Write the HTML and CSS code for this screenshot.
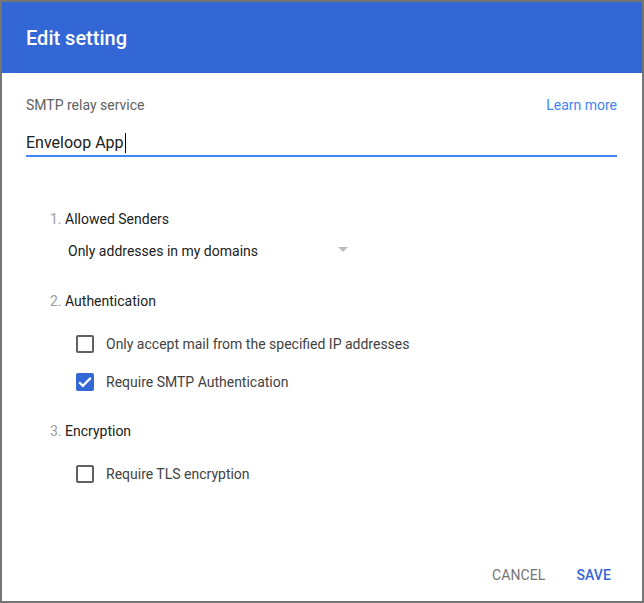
FILE: index.html
```html
<!DOCTYPE html>
<html>
<head>
<meta charset="utf-8">
<link rel="stylesheet" href="styles.css">
</head>
<body>
<div class="dialog">
  <div class="header"><h1 class="title">Edit setting</h1></div>
  <div class="content">
    <div class="label-row">
      <span class="field-label">SMTP relay service</span>
      <a class="learn">Learn more</a>
    </div>
    <div class="input-row">
      <span class="input-text">Enveloop App</span><span class="caret"></span>
    </div>

    <div class="section first">
      <div class="section-title"><span class="num">1.</span> Allowed Senders</div>
      <div class="dropdown">
        <span>Only addresses in my domains</span>
        <span class="arrow"></span>
      </div>
    </div>

    <div class="section">
      <div class="section-title"><span class="num">2.</span> Authentication</div>
      <div class="checks">
        <div class="check-row"><span class="box"></span><span class="check-label">Only accept mail from the specified IP addresses</span></div>
        <div class="check-row"><span class="box checked"><svg viewBox="0 0 18 18" width="18" height="18"><path d="M3.2 9.3l3.6 3.6L14.8 4.9" fill="none" stroke="#fff" stroke-width="2.2"/></svg></span><span class="check-label">Require SMTP Authentication</span></div>
      </div>
    </div>

    <div class="section">
      <div class="section-title"><span class="num">3.</span> Encryption</div>
      <div class="checks">
        <div class="check-row"><span class="box"></span><span class="check-label">Require TLS encryption</span></div>
      </div>
    </div>
  </div>
  <div class="actions">
    <button class="btn cancel">Cancel</button>
    <button class="btn save">Save</button>
  </div>
</div>
</body>
</html>
```

FILE: styles.css
```css
html, body {
  margin: 0;
  padding: 0;
}
body {
  background: #757575;
  font-family: Roboto, "Noto Sans", Arial, sans-serif;
  width: 644px;
  height: 603px;
  overflow: hidden;
  padding: 2px 2px 0 2px;
  box-sizing: border-box;
}
.dialog {
  background: #fff;
  width: 640px;
  height: 599px;
  display: flex;
  flex-direction: column;
}
.header {
  background: #3367d6;
  height: 71px;
  display: flex;
  align-items: center;
  padding: 0 24px;
  box-sizing: border-box;
}
.title {
  margin: 0;
  color: #fff;
  font-size: 20px;
  font-weight: 500;
  line-height: 24px;
  padding-top: 0;
}
.content {
  padding: 24px 25px 0 24px;
  flex: 1;
}
.label-row {
  display: flex;
  justify-content: space-between;
  align-items: center;
  height: 16px;
}
.field-label {
  font-size: 14px;
  color: #616161;
}
.learn {
  font-size: 14px;
  color: #4285f4;
}
.input-row {
  margin-top: 20px;
  height: 20px;
  padding-bottom: 2px;
  border-bottom: 2px solid #4285f4;
  display: flex;
  align-items: center;
}
.input-text {
  font-size: 16px;
  color: #212121;
  line-height: 20px;
}
.caret {
  width: 1px;
  height: 20px;
  background: #000;
  margin-left: 1px;
}
.section {
  padding-left: 24px;
  margin-top: 30px;
}
.section.first {
  margin-top: 52px;
}
.section-title {
  font-size: 14px;
  line-height: 20px;
  color: #212121;
}
.num {
  color: #9e9e9e;
}
.dropdown {
  margin-top: 12px;
  margin-left: 18px;
  width: 282px;
  display: flex;
  justify-content: space-between;
  align-items: center;
  font-size: 14px;
  line-height: 20px;
  color: #212121;
}
.arrow {
  width: 0;
  height: 0;
  border-left: 5.5px solid transparent;
  border-right: 5.5px solid transparent;
  border-top: 5px solid #bdbdbd;
  margin-right: 2px;
  margin-bottom: 3px;
}
.checks {
  margin-top: 23px;
  margin-left: 26px;
  display: flex;
  flex-direction: column;
  gap: 18px;
}
.section:last-child {
  margin-top: 29px;
}
.check-row {
  display: flex;
  align-items: center;
  height: 20px;
}
.box {
  width: 18px;
  height: 18px;
  box-sizing: border-box;
  border: 2px solid #616161;
  border-radius: 2px;
  margin-right: 12px;
  display: flex;
  align-items: center;
  justify-content: center;
}
.box.checked {
  background: #3367d6;
  border-color: #3367d6;
}
.box.checked svg {
  flex: none;
}
.check-label {
  font-size: 14px;
  color: #424242;
  line-height: 20px;
}
.actions {
  display: flex;
  justify-content: flex-end;
  gap: 15px;
  padding: 0 23px 8px 0;
}
.btn {
  background: none;
  border: 0;
  font-family: Roboto, "Noto Sans", Arial, sans-serif;
  font-size: 14px;
  font-weight: 500;
  text-transform: uppercase;
  padding: 0 8px;
  height: 36px;
  line-height: 36px;
  letter-spacing: 0.1px;
}
.cancel {
  color: #757575;
  font-weight: 400;
}
.save {
  color: #3367d6;
}
```
